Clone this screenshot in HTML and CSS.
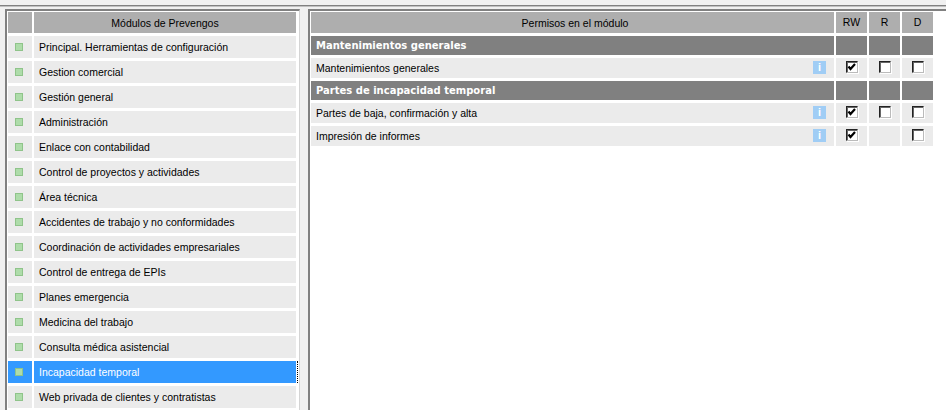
FILE: index.html
```html
<!DOCTYPE html>
<html lang="es">
<head>
    <meta charset="UTF-8">
    <title>Módulos de Prevengos</title>
    <link rel="stylesheet" href="styles.css">
</head>
<body>
    <div class="topbar"></div>
    <div class="panels">
        <div class="panel panel-left">
            <div class="mod-row mod-head">
                <div class="mod-icon"></div>
                <div class="mod-name">Módulos de Prevengos</div>
            </div>
            <div class="mod-row"><div class="mod-icon"><span class="led"></span></div><div class="mod-name">Principal. Herramientas de configuración</div></div>
            <div class="mod-row"><div class="mod-icon"><span class="led"></span></div><div class="mod-name">Gestion comercial</div></div>
            <div class="mod-row"><div class="mod-icon"><span class="led"></span></div><div class="mod-name">Gestión general</div></div>
            <div class="mod-row"><div class="mod-icon"><span class="led"></span></div><div class="mod-name">Administración</div></div>
            <div class="mod-row"><div class="mod-icon"><span class="led"></span></div><div class="mod-name">Enlace con contabilidad</div></div>
            <div class="mod-row"><div class="mod-icon"><span class="led"></span></div><div class="mod-name">Control de proyectos y actividades</div></div>
            <div class="mod-row"><div class="mod-icon"><span class="led"></span></div><div class="mod-name">Área técnica</div></div>
            <div class="mod-row"><div class="mod-icon"><span class="led"></span></div><div class="mod-name">Accidentes de trabajo y no conformidades</div></div>
            <div class="mod-row"><div class="mod-icon"><span class="led"></span></div><div class="mod-name">Coordinación de actividades empresariales</div></div>
            <div class="mod-row"><div class="mod-icon"><span class="led"></span></div><div class="mod-name">Control de entrega de EPIs</div></div>
            <div class="mod-row"><div class="mod-icon"><span class="led"></span></div><div class="mod-name">Planes emergencia</div></div>
            <div class="mod-row"><div class="mod-icon"><span class="led"></span></div><div class="mod-name">Medicina del trabajo</div></div>
            <div class="mod-row"><div class="mod-icon"><span class="led"></span></div><div class="mod-name">Consulta médica asistencial</div></div>
            <div class="mod-row selected"><div class="mod-icon"><span class="led"></span></div><div class="mod-name">Incapacidad temporal</div></div>
            <div class="mod-row"><div class="mod-icon"><span class="led"></span></div><div class="mod-name">Web privada de clientes y contratistas</div></div>
        </div>
        <div class="panel panel-right">
            <div class="perm-row perm-head">
                <div class="perm-name">Permisos en el módulo</div>
                <div class="perm-col">RW</div>
                <div class="perm-col">R</div>
                <div class="perm-col">D</div>
            </div>
            <div class="perm-row perm-group">
                <div class="perm-name">Mantenimientos generales</div>
                <div class="perm-col"></div><div class="perm-col"></div><div class="perm-col"></div>
            </div>
            <div class="perm-row">
                <div class="perm-name">Mantenimientos generales<span class="info">i</span></div>
                <div class="perm-col"><span class="check"><svg viewBox="0 0 10 10"><path d="M1.5 4.5l2 2.5 4.5-5"/></svg></span></div>
                <div class="perm-col"><span class="check"></span></div>
                <div class="perm-col"><span class="check"></span></div>
            </div>
            <div class="perm-row perm-group">
                <div class="perm-name">Partes de incapacidad temporal</div>
                <div class="perm-col"></div><div class="perm-col"></div><div class="perm-col"></div>
            </div>
            <div class="perm-row">
                <div class="perm-name">Partes de baja, confirmación y alta<span class="info">i</span></div>
                <div class="perm-col"><span class="check"><svg viewBox="0 0 10 10"><path d="M1.5 4.5l2 2.5 4.5-5"/></svg></span></div>
                <div class="perm-col"><span class="check"></span></div>
                <div class="perm-col"><span class="check"></span></div>
            </div>
            <div class="perm-row">
                <div class="perm-name">Impresión de informes<span class="info">i</span></div>
                <div class="perm-col"><span class="check"><svg viewBox="0 0 10 10"><path d="M1.5 4.5l2 2.5 4.5-5"/></svg></span></div>
                <div class="perm-col"></div>
                <div class="perm-col"><span class="check"></span></div>
            </div>
        </div>
    </div>
</body>
</html>
```
FILE: styles.css
```css
html, body {
    height: 100%;
}

body {
    margin: 0;
    overflow: hidden;
    background-color: #f0f0f0;
    font-family: "Liberation Sans", sans-serif;
    font-size: 10.5px;
    color: #000;
}

.topbar {
    height: 5px;
    border-bottom: 1px solid #808080;
    box-shadow: 0 1px 0 #c0c0c0;
    margin-bottom: 3px;
}

.panels {
    display: flex;
    gap: 8px;
    height: 401px;
    padding-left: 5px;
}

.panel {
    box-sizing: border-box;
    background: #fff;
    border: 2px solid #808080;
    border-bottom: none;
    border-right: none;
    padding: 1px 0 0 1px;
    overflow: hidden;
}

.panel-left {
    width: 295px;
    border-right: 1px solid #d4d4d4;
    position: relative;
}

.panel-right {
    flex: 1;
}

.mod-row {
    display: flex;
    gap: 2px;
    height: 22px;
    margin-bottom: 3px;
    width: 288px;
}

.mod-icon {
    width: 24px;
    display: flex;
    align-items: center;
    justify-content: center;
    background: #ebebeb;
}

.mod-name {
    flex: 1;
    padding-left: 5px;
    line-height: 23px;
    background: #ebebeb;
}

.mod-head {
    height: 21px;
}

.mod-head .mod-icon,
.mod-head .mod-name {
    background: #aeaeae;
}

.mod-head .mod-name {
    text-align: center;
    padding-left: 0;
}

.led {
    box-sizing: border-box;
    width: 8px;
    height: 8px;
    margin-right: 2px;
    background: #aedcaa;
    border: 1px solid #8fc48a;
}

.selected {
    position: relative;
}

.selected .mod-icon,
.selected .mod-name {
    background: #3399ff;
    color: #fff;
}

/* focus dots next to the selected row */
.selected::after {
    content: "";
    position: absolute;
    right: -2px;
    top: 0;
    height: 22px;
    border-right: 1px dotted #000;
}

.perm-row {
    display: flex;
    gap: 2px;
    height: 20px;
    margin-bottom: 3px;
}

.perm-head {
    height: 21px;
}

.perm-group {
    height: 19px;
}

.perm-name {
    width: 518px;
    padding-left: 5px;
    position: relative;
    line-height: 21px;
    background: #ebebeb;
}

.perm-col {
    width: 31px;
    display: flex;
    align-items: center;
    justify-content: center;
    background: #ebebeb;
}

.perm-head .perm-name,
.perm-head .perm-col {
    background: #aeaeae;
    line-height: 23px;
}

.perm-head .perm-name {
    text-align: center;
}

.perm-group .perm-name,
.perm-group .perm-col {
    background: #808080;
}

.perm-group .perm-name {
    color: #fff;
    font-family: "DejaVu Sans", sans-serif;
    font-weight: bold;
    font-size: 10px;
    line-height: 20px;
}

.info {
    position: absolute;
    right: 8px;
    top: 3px;
    width: 13px;
    height: 13px;
    background: #a0cdf5;
    color: #fff;
    font-weight: bold;
    font-size: 11px;
    line-height: 13px;
    text-align: center;
}

.check {
    box-sizing: border-box;
    width: 12px;
    height: 12px;
    margin: -2px -1px 0 0;
    background: #fff;
    border: 1px solid;
    border-color: #222 #bbb #bbb #222;
    box-shadow: inset 1px 1px 0 #666, 1px 1px 0 #fff;
    display: block;
}

.check svg {
    display: block;
    width: 10px;
    height: 10px;
    fill: none;
    stroke: #000;
    stroke-width: 2.2;
}
```
